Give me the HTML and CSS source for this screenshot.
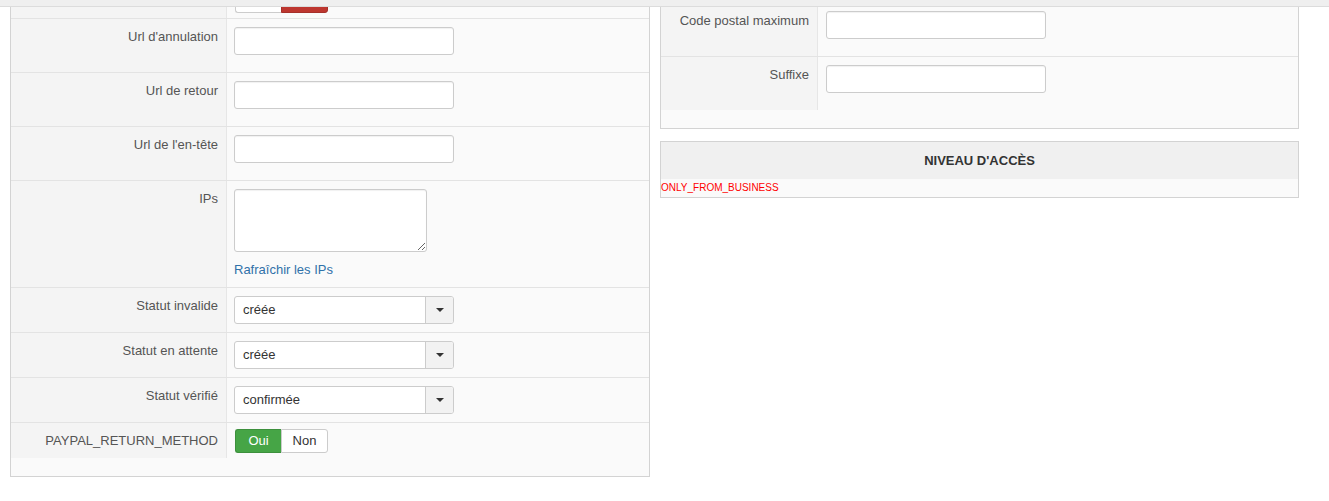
FILE: index.html
```html
<!DOCTYPE html>
<html lang="fr">
<head>
  <meta charset="UTF-8" />
  <meta name="viewport" content="width=device-width, initial-scale=1.0"/>
  <title>Configuration PayPal</title>
  <link rel="stylesheet" href="styles.css">
</head>
<body>

<div class="topbar"></div>

<div class="columns">

  <!-- Paramètres du plugin -->
  <div class="panel panel-main">
    <div class="row">
      <div class="key">Mode test</div>
      <div class="val val-toggle">
        <div class="toggle"><span class="on">Oui</span><span>Non</span></div>
      </div>
    </div>
    <div class="row">
      <div class="key">Notification</div>
      <div class="val val-toggle">
        <div class="toggle"><span>Oui</span><span class="off">Non</span></div>
      </div>
    </div>
    <div class="row">
      <div class="key">Url d'annulation</div>
      <div class="val"><input type="text" class="field" /></div>
    </div>
    <div class="row">
      <div class="key">Url de retour</div>
      <div class="val"><input type="text" class="field" /></div>
    </div>
    <div class="row">
      <div class="key">Url de l'en-tête</div>
      <div class="val"><input type="text" class="field" /></div>
    </div>
    <div class="row">
      <div class="key">IPs</div>
      <div class="val">
        <textarea class="area"></textarea>
        <a href="#" class="refresh">Rafraîchir les IPs</a>
      </div>
    </div>
    <div class="row">
      <div class="key">Statut invalide</div>
      <div class="val val-select">
        <div class="chzn"><span class="chzn-text">créée</span><span class="chzn-arrow"></span></div>
      </div>
    </div>
    <div class="row">
      <div class="key">Statut en attente</div>
      <div class="val val-select">
        <div class="chzn"><span class="chzn-text">créée</span><span class="chzn-arrow"></span></div>
      </div>
    </div>
    <div class="row">
      <div class="key">Statut vérifié</div>
      <div class="val val-select">
        <div class="chzn"><span class="chzn-text">confirmée</span><span class="chzn-arrow"></span></div>
      </div>
    </div>
    <div class="row">
      <div class="key">PAYPAL_RETURN_METHOD</div>
      <div class="val val-toggle">
        <div class="toggle"><span class="on">Oui</span><span>Non</span></div>
      </div>
    </div>
  </div>

  <div class="side">
    <!-- Restrictions de zone -->
    <div class="panel panel-zone">
      <div class="row">
        <div class="key">Code postal minimum</div>
        <div class="val"><input type="text" class="field" /></div>
      </div>
      <div class="row">
        <div class="key">Code postal maximum</div>
        <div class="val"><input type="text" class="field" /></div>
      </div>
      <div class="row">
        <div class="key">Suffixe</div>
        <div class="val"><input type="text" class="field" /></div>
      </div>
    </div>

    <div class="access">
      <div class="access-title">NIVEAU D'ACCÈS</div>
      <div class="access-body">ONLY_FROM_BUSINESS</div>
    </div>
  </div>

</div>

</body>
</html>
```

FILE: styles.css
```css
body {
  font-family: "Liberation Sans", Arial, sans-serif;
  font-size: 13px;
  line-height: 18px;
  color: #333;
  margin: 0;
  padding: 0;
  background: #fff;
}

/* fixed toolbar strip, page is scrolled under it */
.topbar {
  position: fixed;
  top: 0;
  left: 0;
  right: 0;
  height: 6px;
  background: #efefef;
  border-bottom: 1px solid #dcdcdc;
  z-index: 10;
}

.columns {
  display: grid;
  grid-template-columns: 640px 639px;
  column-gap: 10px;
  align-items: start;
  padding-left: 10px;
  margin-top: -54px;
}

.panel {
  background: #fafafa;
  border: 1px solid #d3d3d3;
  padding-bottom: 18px;
}

.panel-zone {
  padding-top: 2px;
}

.row {
  display: grid;
  grid-template-columns: 216px 1fr;
  border-bottom: 1px solid #e3e3e3;
}

.row:last-child {
  border-bottom: none;
}

.panel-zone .row {
  grid-template-columns: 157px 1fr;
}

.key {
  background: #f4f4f4;
  border-right: 1px solid #e6e6e6;
  color: #555;
  text-align: right;
  padding: 9px 8px 8px 8px;
}

.val {
  padding: 8px 7px;
}

.panel-zone .val {
  padding-left: 8px;
}

.val-toggle {
  padding-top: 6px;
  padding-bottom: 5px;
}

.field {
  display: block;
  box-sizing: border-box;
  width: 220px;
  height: 28px;
  margin: 0 0 9px 0;
  padding: 4px 6px;
  border: 1px solid #ccc;
  border-radius: 3px;
  background: #fff;
  box-shadow: inset 0 1px 1px rgba(0, 0, 0, 0.06);
  font: inherit;
}

.area {
  display: block;
  box-sizing: border-box;
  width: 193px;
  height: 63px;
  margin: 0 0 9px 0;
  padding: 4px 6px;
  border: 1px solid #ccc;
  border-radius: 3px;
  background: #fff;
  box-shadow: inset 0 1px 1px rgba(0, 0, 0, 0.06);
  font: inherit;
}

.refresh {
  color: #3071a9;
  text-decoration: none;
}

/* chosen-like dropdown */
.chzn {
  display: flex;
  box-sizing: border-box;
  width: 220px;
  height: 28px;
  border: 1px solid #ccc;
  border-radius: 3px;
  background: #fff;
  overflow: hidden;
}

.chzn-text {
  flex: 1;
  padding-left: 8px;
  line-height: 26px;
  color: #333;
}

.chzn-arrow {
  width: 27px;
  background: #f2f2f2;
  border-left: 1px solid #ccc;
  display: flex;
  align-items: center;
  justify-content: center;
}

.chzn-arrow::after {
  content: "";
  border-top: 4px solid #333;
  border-left: 4px solid transparent;
  border-right: 4px solid transparent;
}

/* Oui / Non radio buttons */
.toggle {
  display: inline-flex;
  margin-left: 1px;
}

.toggle span {
  box-sizing: border-box;
  height: 24px;
  line-height: 22px;
  text-align: center;
  font-size: 13px;
  color: #333;
  background: #fff;
  border: 1px solid #ccc;
}

.toggle span:first-child {
  width: 46px;
  border-right: none;
  border-radius: 3px 0 0 3px;
}

.toggle span:last-child {
  width: 47px;
  border-radius: 0 3px 3px 0;
}

.toggle .on {
  background: #46a546;
  border-color: #3d903d;
  color: #fff;
}

.toggle .off {
  background: #bd362f;
  border-color: #a5302a;
  color: #fff;
}

.access {
  margin-top: 12px;
  border: 1px solid #d3d3d3;
  background: #fafafa;
}

.access-title {
  background: #f0f0f0;
  height: 37px;
  line-height: 37px;
  text-align: center;
  font-weight: bold;
  color: #333;
}

.access-body {
  height: 18px;
  line-height: 18px;
  font-size: 10px;
  color: #f00;
}
```
